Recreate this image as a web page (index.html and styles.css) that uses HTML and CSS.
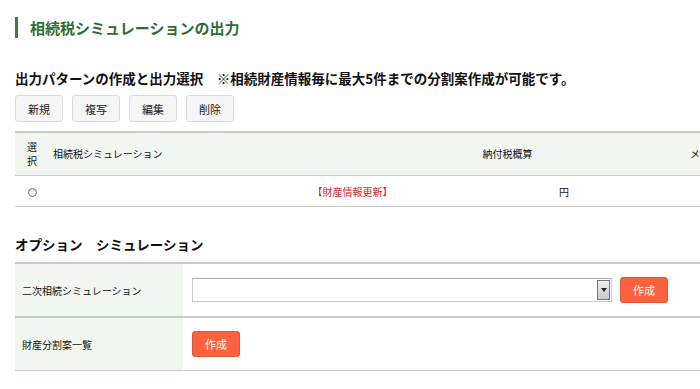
FILE: index.html
```html
<!DOCTYPE html>
<html lang="ja">
<head>
    <meta charset="UTF-8">
    <title>相続税シミュレーションの出力</title>
    <link rel="stylesheet" href="styles.css">
</head>
<body>
    <div class="page">
        <h1 class="page-title">相続税シミュレーションの出力</h1>

        <h2 class="section-title">出力パターンの作成と出力選択　※相続財産情報毎に最大5件までの分割案作成が可能です。</h2>
        <div class="buttons">
            <button class="btn">新規</button>
            <button class="btn">複写</button>
            <button class="btn">編集</button>
            <button class="btn">削除</button>
        </div>

        <table class="pattern-table">
            <colgroup>
                <col class="col-select">
                <col class="col-name">
                <col class="col-update">
                <col class="col-tax">
                <col class="col-memo">
            </colgroup>
            <thead>
                <tr>
                    <th class="cell-select">選<br>択</th>
                    <th class="cell-name" colspan="2">相続税シミュレーション</th>
                    <th class="cell-tax">納付税概算</th>
                    <th class="cell-memo">メモ</th>
                </tr>
            </thead>
            <tbody>
                <tr>
                    <td class="cell-select"><span class="radio"></span></td>
                    <td></td>
                    <td class="cell-update"><a class="update-link">【財産情報更新】</a></td>
                    <td class="cell-yen">円</td>
                    <td></td>
                </tr>
            </tbody>
        </table>

        <h2 class="section-title option-title">オプション　シミュレーション</h2>
        <table class="option-table">
            <tr>
                <th>二次相続シミュレーション</th>
                <td>
                    <div class="option-row">
                        <div class="select-box">
                            <span class="select-field"></span>
                            <span class="select-arrow">
                                <svg width="6" height="4" viewBox="0 0 6 4"><path d="M0 0H6L3 4Z" fill="#222"/></svg>
                            </span>
                        </div>
                        <button class="btn-create">作成</button>
                    </div>
                </td>
            </tr>
            <tr>
                <th>財産分割案一覧</th>
                <td>
                    <button class="btn-create">作成</button>
                </td>
            </tr>
        </table>
    </div>
</body>
</html>
```

FILE: styles.css
```css
:root {
    --green: #2f6e2f;
    --line: #c6ccc6;
    --head-bg: #f2f6f0;
    --orange: #fb6240;
}

html, body {
    overflow: hidden;
}

body {
    margin: 0;
    padding: 0;
    font-family: "Noto Sans CJK JP", "Noto Sans", sans-serif;
    color: #111;
    background: #fff;
}

.page {
    width: 820px;
    padding: 17px 15px 0;
}

.page-title {
    margin: 0;
    height: 21px;
    line-height: 21px;
    border-left: 3px solid #3b7d3b;
    padding-left: 12px;
    font-size: 15px;
    font-weight: bold;
    color: var(--green);
}

.section-title {
    margin: 31px 0 0;
    font-size: 13.5px;
    line-height: 18px;
    font-weight: bold;
}

.buttons {
    display: flex;
    gap: 9px;
    margin-top: 8px;
}

.btn {
    width: 48px;
    height: 27px;
    font-family: inherit;
    font-size: 11px;
    color: #222;
    background: #f5f5f5;
    border: 1px solid #dcdcdc;
    border-radius: 3px;
    padding: 0;
}

/* pattern table */
.pattern-table {
    margin-top: 9px;
    width: 810px;
    border-collapse: collapse;
    table-layout: fixed;
    font-size: 10px;
    color: #111;
}

.col-select { width: 30px; }
.col-name { width: 220px; }
.col-update { width: 175px; }
.col-tax { width: 135px; }
.col-memo { width: 250px; }

.pattern-table th {
    height: 42px;
    padding: 0;
    background: var(--head-bg);
    font-weight: normal;
    border-top: 2px solid var(--line);
    border-bottom: 1px solid var(--line);
    line-height: 14px;
}

.pattern-table td {
    height: 30px;
    padding: 0;
    border-bottom: 1px solid var(--line);
}

.pattern-table .cell-select {
    text-align: left;
    padding: 0 0 0 12px;
}

.pattern-table .cell-name {
    text-align: left;
    padding-left: 8px;
}

.pattern-table .cell-tax,
.pattern-table .cell-memo,
.pattern-table .cell-update {
    text-align: center;
}

.pattern-table .cell-yen {
    text-align: right;
    padding-right: 6px;
    color: #111;
}

.update-link {
    color: #d9261c;
}

.radio {
    display: inline-block;
    width: 7px;
    height: 7px;
    margin-left: 1px;
    border: 1px solid #777;
    border-radius: 50%;
    background: linear-gradient(#ddd, #fff);
    vertical-align: middle;
}

/* option table */
.option-title {
    margin-top: 28px;
}

.option-table {
    margin-top: 9px;
    width: 810px;
    border-collapse: collapse;
    font-size: 10px;
}

.option-table th {
    width: 161px;
    height: 52px;
    padding: 0 0 0 7px;
    text-align: left;
    font-weight: normal;
    background: var(--head-bg);
    border-top: 2px solid var(--line);
    border-bottom: 1px solid var(--line);
}

.option-table td {
    padding: 0 9px;
    border-top: 2px solid var(--line);
    border-bottom: 1px solid var(--line);
}

.option-row {
    display: flex;
    align-items: center;
    gap: 8px;
}

.select-box {
    display: flex;
    width: 418px;
    height: 22px;
    border: 1px solid #c8c8c8;
    border-top-color: #a8a8a8;
    background: #fff;
}

.select-field {
    flex: 1;
}

.select-arrow {
    width: 11px;
    display: flex;
    align-items: center;
    justify-content: center;
    margin: 1px;
    border: 1px solid #777;
    background: linear-gradient(#f0f0f0, #c9c9c9);
}

.btn-create {
    width: 48px;
    height: 26px;
    padding: 0;
    font-family: inherit;
    font-size: 11px;
    color: #fff;
    background: var(--orange);
    border: 1px solid #e9552f;
    border-radius: 3px;
}
```
